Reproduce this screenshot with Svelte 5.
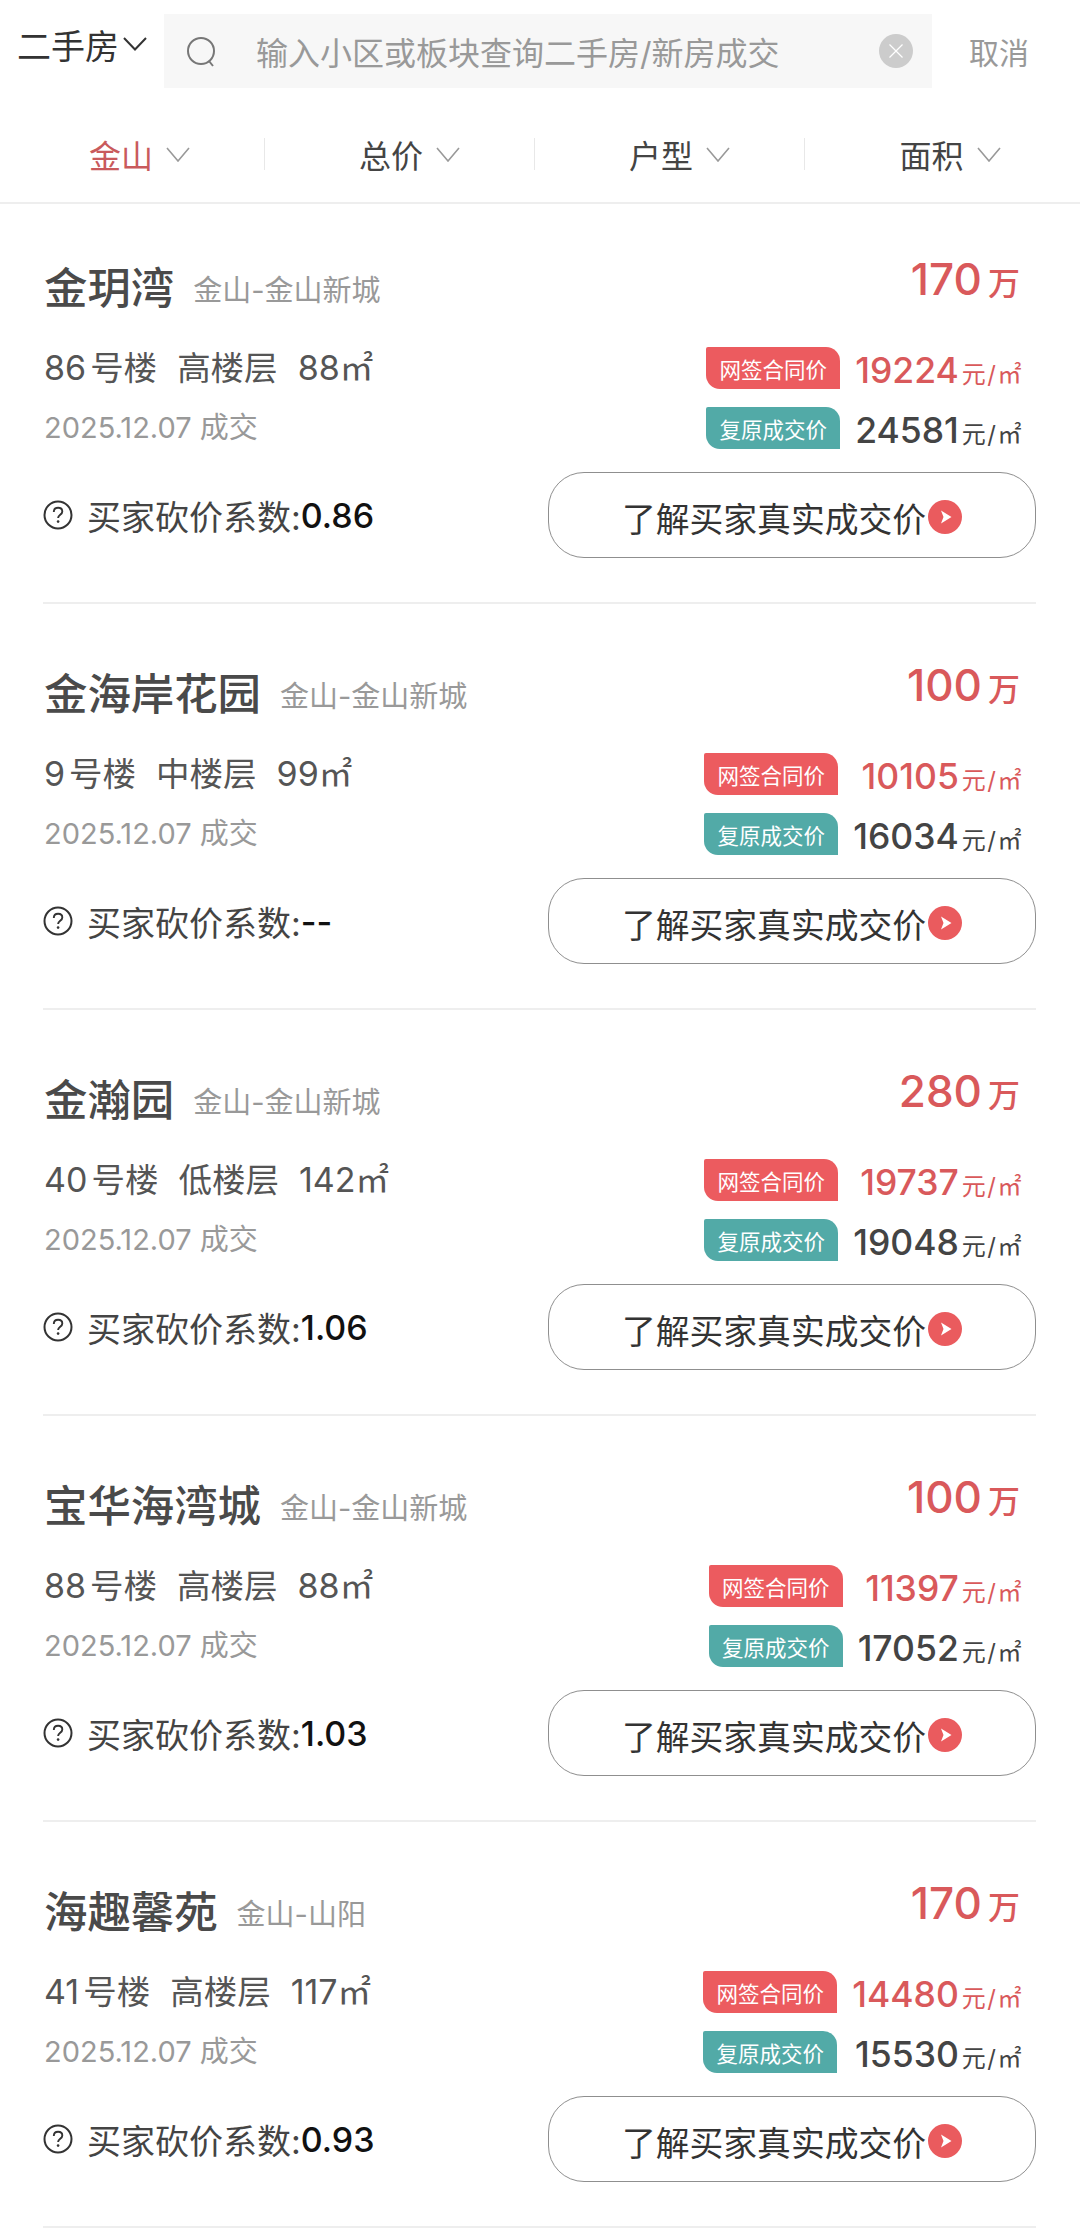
<script>
  const tabs = [
    { label: '金山', active: true },
    { label: '总价' },
    { label: '户型' },
    { label: '面积' }
  ];

  const deals = [
    { name: '金玥湾', area: '金山-金山新城', building: '86', floor: '高楼层', size: '88', total: '170', signed: '19224', real: '24581', ratio: '0.86' },
    { name: '金海岸花园', area: '金山-金山新城', building: '9', floor: '中楼层', size: '99', total: '100', signed: '10105', real: '16034', ratio: '--' },
    { name: '金瀚园', area: '金山-金山新城', building: '40', floor: '低楼层', size: '142', total: '280', signed: '19737', real: '19048', ratio: '1.06' },
    { name: '宝华海湾城', area: '金山-金山新城', building: '88', floor: '高楼层', size: '88', total: '100', signed: '11397', real: '17052', ratio: '1.03' },
    { name: '海趣馨苑', area: '金山-山阳', building: '41', floor: '高楼层', size: '117', total: '170', signed: '14480', real: '15530', ratio: '0.93' }
  ];
</script>

<div class="page">
  <header class="search-bar">
    <button class="city">
      二手房
      <svg width="24" height="14" viewBox="0 0 24 14" fill="none" stroke="#333" stroke-width="2">
        <polyline points="1 1 12 12.5 23 1" />
      </svg>
    </button>
    <div class="search-box">
      <svg class="search-icon" width="32" height="30" viewBox="0 0 32 30" fill="none" stroke="#777" stroke-width="2">
        <circle cx="15" cy="14" r="13" />
        <line x1="23" y1="24" x2="27" y2="29" />
      </svg>
      <span class="placeholder">输入小区或板块查询二手房/新房成交</span>
      <span class="clear">
        <svg width="16" height="16" viewBox="0 0 16 16" stroke="#fff" stroke-width="1.3">
          <line x1="1.5" y1="1.5" x2="14.5" y2="14.5" />
          <line x1="14.5" y1="1.5" x2="1.5" y2="14.5" />
        </svg>
      </span>
    </div>
    <span class="cancel">取消</span>
  </header>

  <nav class="tabs">
    {#each tabs as tab}
      <div class="tab" class:active={tab.active}>
        <span>{tab.label}</span>
        <svg width="24" height="15" viewBox="0 0 24 15" fill="none" stroke="#999" stroke-width="1.6">
          <polyline points="1 1 12 14 23 1" />
        </svg>
      </div>
    {/each}
  </nav>

  <main class="list">
    {#each deals as deal}
      <article class="deal">
        <div class="title-row">
          <h2>{deal.name}</h2>
          <span class="area">{deal.area}</span>
          <span class="total"><b>{deal.total}</b><i>万</i></span>
        </div>

        <div class="detail-row">
          <div class="facts">
            <div class="specs">
              <span><em>{deal.building}</em>号楼</span>
              <span>{deal.floor}</span>
              <span><em class="size">{deal.size}</em>㎡</span>
            </div>
            <div class="date">2025.12.07 成交</div>
          </div>
          <div class="prices">
            <span class="badge red">网签合同价</span>
            <span class="price red-text"><b>{deal.signed}</b><i>元/㎡</i></span>
            <span class="badge teal">复原成交价</span>
            <span class="price"><b>{deal.real}</b><i>元/㎡</i></span>
          </div>
        </div>

        <div class="action-row">
          <div class="ratio">
            <svg width="30" height="30" viewBox="0 0 30 30" fill="none" stroke="#333" stroke-width="2">
              <circle cx="15" cy="15" r="13.5" />
              <path d="M10.8 12c0-2.6 1.9-4.2 4.3-4.2s4.2 1.5 4.2 3.7c0 3.4-4.2 3.2-4.2 6.6" stroke-width="1.9" />
              <circle cx="15.1" cy="21.6" r="1.3" fill="#333" stroke="none" />
            </svg>
            <span class="ratio-label">买家砍价系数:</span><b>{deal.ratio}</b>
          </div>
          <button class="learn">
            <span>了解买家真实成交价</span>
            <svg width="34" height="34" viewBox="0 0 34 34">
              <circle cx="17" cy="17" r="17" fill="#ea5b5e" />
              <path d="M13 10.5 L23.5 17 L13 23.5 L15.5 17 Z" fill="#fff" />
            </svg>
          </button>
        </div>
      </article>
    {/each}
  </main>
</div>

<style>
  :global(body) {
    margin: 0;
    background: #fff;
  }
  .page {
    width: 1080px;
    height: 2236px;
    overflow: hidden;
    font-family: Inter, "Noto Sans CJK SC", sans-serif;
    color: #444;
  }
  button {
    font: inherit;
    background: none;
    padding: 0;
  }

  .search-bar {
    display: flex;
    align-items: center;
    height: 74px;
    padding-top: 14px;
  }
  .city {
    display: flex;
    align-items: center;
    gap: 4px;
    width: 164px;
    height: 60px;
    padding: 0 0 14px 17px;
    box-sizing: border-box;
    border: none;
    font-size: 34px;
    color: #333;
    white-space: nowrap;
  }
  .search-box {
    display: flex;
    align-items: center;
    width: 768px;
    height: 74px;
    box-sizing: border-box;
    padding: 0 19px 0 22px;
    background: #f7f7f7;
  }
  .search-icon {
    flex-shrink: 0;
    margin-top: 2px;
  }
  .placeholder {
    flex: 1;
    margin-left: 38px;
    font-size: 32px;
    color: #999;
    white-space: nowrap;
  }
  .clear {
    display: flex;
    align-items: center;
    justify-content: center;
    width: 34px;
    height: 34px;
    border-radius: 50%;
    background: #ccc;
  }
  .cancel {
    margin-left: 37px;
    font-size: 30px;
    color: #999;
  }

  .tabs {
    display: flex;
    align-items: center;
    height: 116px;
    box-sizing: border-box;
    margin-left: -5px;
    padding-top: 18px;
    border-bottom: 2px solid #eee;
  }
  .tab {
    display: flex;
    align-items: center;
    justify-content: center;
    gap: 13px;
    width: 270px;
    height: 32px;
    box-sizing: border-box;
    padding-left: 20px;
    font-size: 32px;
    color: #444;
    border-right: 1px solid #e8e8e8;
  }
  .tab:last-child {
    border-right: none;
  }
  .tab.active {
    color: #c95a5c;
  }

  .list {
    padding: 0 44px 0 43px;
  }
  .deal {
    padding-top: 60px;
    padding-bottom: 44px;
    border-bottom: 2px solid #eee;
  }
  .deal:first-child {
    padding-top: 54px;
  }

  .title-row {
    display: flex;
    align-items: center;
    height: 60px;
    padding: 0 16px 0 1px;
  }
  h2 {
    margin: 0 0 6px;
    font-size: 43.4px;
    font-weight: 500;
    color: #4a4a4a;
  }
  .area {
    margin-left: 19px;
    font-size: 29px;
    color: #999;
  }
  .total {
    margin-left: auto;
    margin-top: -18px;
    color: #d9595b;
    white-space: nowrap;
  }
  .total b {
    font-size: 44px;
    font-weight: 500;
  }
  .total i {
    margin-left: 6px;
    font-style: normal;
    font-weight: 500;
    font-size: 32px;
  }

  .detail-row {
    display: flex;
    justify-content: space-between;
    padding: 29px 16px 0 1px;
  }
  .specs {
    display: flex;
    gap: 20px;
    font-size: 33.5px;
    line-height: 42px;
    color: #555;
  }
  .specs em {
    margin-right: 4px;
    font-style: normal;
    font-size: 34px;
  }
  .specs em.size {
    margin-right: 0;
  }
  .date {
    margin-top: 19px;
    font-size: 29px;
    line-height: 40px;
    color: #999;
  }

  .prices {
    display: grid;
    grid-template-columns: auto auto;
    grid-auto-rows: 42px;
    align-items: center;
    column-gap: 15px;
    row-gap: 18px;
  }
  .badge {
    display: flex;
    align-items: center;
    justify-content: center;
    width: 134px;
    height: 42px;
    font-size: 21.5px;
    color: #fff;
    border-radius: 2px 14px 0 14px;
  }
  .badge.red {
    background: #ec5b5f;
  }
  .badge.teal {
    background: #52aaa7;
  }
  .price {
    align-self: start;
    height: 42px;
    text-align: right;
    white-space: nowrap;
    line-height: 47px;
    color: #444;
  }
  .price b {
    font-size: 35.5px;
    font-weight: 450;
  }
  .price i {
    margin-left: 3px;
    margin-right: -3px;
    font-style: normal;
    font-size: 24px;
    letter-spacing: 1.5px;
  }
  .red-text {
    color: #d9595b;
  }

  .action-row {
    display: flex;
    align-items: center;
    justify-content: space-between;
    margin-top: 23px;
  }
  .ratio {
    display: flex;
    align-items: center;
    font-size: 34px;
    color: #444;
  }
  .ratio svg {
    margin-right: 14px;
  }
  .ratio b {
    font-weight: 500;
    color: #111;
  }
  .learn {
    display: flex;
    align-items: center;
    justify-content: center;
    gap: 2px;
    width: 488px;
    height: 86px;
    box-sizing: border-box;
    padding-top: 4px;
    border: 1px solid #8f8f8f;
    border-radius: 36px;
    font-size: 33.8px;
    color: #333;
  }
</style>
